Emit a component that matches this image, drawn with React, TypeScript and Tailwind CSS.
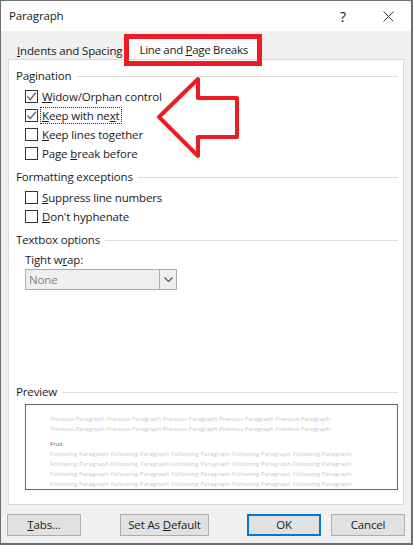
import type { ReactNode } from 'react';

const FONT = 'font-["Open_Sans","Noto_Sans",sans-serif]';
const TEXT = 'text-[11.5px] tracking-[-0.15px] text-[#1a1a1a]';

function GroupLabel({ children }: { children: ReactNode }) {
    return (
        <div className={`flex items-center gap-[5px] h-[16px] leading-[16px] ${TEXT}`}>
            <span>{children}</span>
            <div className="flex-1 h-[1px] bg-[#dcdcdc]" />
        </div>
    );
}

function CheckRow({ label, checked, focused }: { label: ReactNode; checked?: boolean; focused?: boolean }) {
    return (
        <div className="flex items-center h-[19px] pl-[9px]">
            <div className="w-[13px] h-[13px] border border-[#333333] bg-white flex items-center justify-center shrink-0">
                {checked && (
                    <svg width="11" height="11" viewBox="0 0 11 11" fill="none">
                        <path d="M1.5 5.5 L4.2 8.5 L9.8 1.8" stroke="#707070" strokeWidth="1.5" />
                    </svg>
                )}
            </div>
            <span
                className={`ml-[2px] px-[1px] leading-[15px] border border-dotted ${TEXT} ${
                    focused ? 'border-[#333333]' : 'border-transparent'
                }`}
            >
                {label}
            </span>
        </div>
    );
}

function DialogButton({ children, width, primary }: { children: ReactNode; width: string; primary?: boolean }) {
    return (
        <button
            className={`h-[22px] ${width} flex items-center justify-center bg-[#e1e1e1] ${TEXT} ${
                primary ? 'border-2 border-[#0078d7]' : 'border border-[#adadad]'
            }`}
        >
            {children}
        </button>
    );
}

const previousLine = Array(5).fill('Previous Paragraph').join(' ');
const followingLine = Array(5).fill('Following Paragraph').join(' ');

export default function App() {
    return (
        <div className={`${FONT} relative w-[413px] h-[545px] overflow-hidden bg-[#f0f0f0] border-t border-l border-r-2 border-b-2 border-[#6e6e6e] flex flex-col`}>
            {/* Title bar */}
            <div className={`h-[30px] bg-white flex items-center shrink-0 pl-[8px] ${TEXT}`}>
                <span>Paragraph</span>
                <span className="ml-auto text-[14px] mr-[37px]">?</span>
                <svg className="mr-[17px]" width="11" height="11" viewBox="0 0 11 11" fill="none">
                    <path d="M0.5 0.5 L10.5 10.5 M10.5 0.5 L0.5 10.5" stroke="#333333" strokeWidth="1" />
                </svg>
            </div>

            {/* Tabs */}
            <div className={`h-[28px] pl-[16px] flex items-end shrink-0 ${TEXT}`}>
                <span className="leading-[16px]">
                    <u>I</u>ndents and Spacing
                </span>
                <div className="ml-[7px] w-[128px] h-[20px] bg-white pl-[10px] pt-[3px] leading-[16px] tracking-[-0.3px]">
                    Line and <u>P</u>age Breaks
                </div>
            </div>

            {/* Tab panel */}
            <div className="ml-[7px] mr-[7px] h-[446px] shrink-0 bg-white border border-[#d9d9d9] pl-[7px] pr-[5px] pt-[8px] flex flex-col">
                <GroupLabel>Pagination</GroupLabel>
                <div className="mt-[3px]">
                    <CheckRow checked label={<><u>W</u>idow/Orphan control</>} />
                    <CheckRow checked focused label={<><u>K</u>eep with ne<u>x</u>t</>} />
                    <CheckRow label={<><u>K</u>eep lines together</>} />
                    <CheckRow label={<>Page <u>b</u>reak before</>} />
                </div>

                <div className="mt-[6px]">
                    <GroupLabel>Formatting exceptions</GroupLabel>
                </div>
                <div className="mt-[3px]">
                    <CheckRow label={<><u>S</u>uppress line numbers</>} />
                    <CheckRow label={<><u>D</u>on't hyphenate</>} />
                </div>

                <div className="mt-[6px]">
                    <GroupLabel>Textbox options</GroupLabel>
                </div>
                <div className={`mt-[4px] pl-[9px] h-[16px] leading-[16px] ${TEXT}`}>
                    Tight w<u>r</u>ap:
                </div>
                <div className="mt-[1px] ml-[9px] w-[152px] h-[21px] bg-[#efefef] border border-[#adadad] flex items-center">
                    <span className="pl-[3px] flex-1 text-[11.5px] tracking-[-0.15px] text-[#808080]">None</span>
                    <div className="w-[17px] h-full border-l border-[#adadad] flex items-center justify-center">
                        <svg width="9" height="6" viewBox="0 0 9 6" fill="none">
                            <path d="M0.5 0.5 L4.5 4.5 L8.5 0.5" stroke="#555555" strokeWidth="1.2" />
                        </svg>
                    </div>
                </div>

                <div className="mt-[94px]">
                    <GroupLabel>Preview</GroupLabel>
                </div>
                <div className="mt-[4px] ml-[9px] h-[86px] border border-[#646464] overflow-hidden pl-[24px] pt-[9px] text-[6px] font-medium leading-[10px] text-[#c8c8c8] whitespace-nowrap">
                    <div>{previousLine}</div>
                    <div>{previousLine}</div>
                    <div className="mt-[5px] text-[#606060]">Fruit</div>
                    <div className="tracking-[0.1px]">{followingLine}</div>
                    <div className="tracking-[0.1px]">{followingLine}</div>
                    <div className="tracking-[0.1px]">{followingLine}</div>
                    <div className="tracking-[0.1px]">{followingLine}</div>
                    <div className="tracking-[0.1px]">{followingLine}</div>
                </div>
            </div>

            {/* Footer buttons */}
            <div className="mt-[9px] pl-[6px] flex items-center shrink-0">
                <DialogButton width="w-[74px]"><span><u>T</u>abs...</span></DialogButton>
                <div className="ml-[39px]">
                    <DialogButton width="w-[89px]"><span>Set As <u>D</u>efault</span></DialogButton>
                </div>
                <div className="ml-[38px]">
                    <DialogButton width="w-[74px]" primary>OK</DialogButton>
                </div>
                <div className="ml-[10px]">
                    <DialogButton width="w-[74px]">Cancel</DialogButton>
                </div>
            </div>

            {/* Red annotations over the dialog */}
            <div className="absolute left-[123px] top-[33px] w-[138px] h-[32px] border-[5px] border-[#ed1c24]" />
            <svg className="absolute left-[0px] top-[0px]" width="413" height="545" fill="none">
                <path
                    d="M158 116 L197 78 L197 97 L236 97 L236 136 L197 136 L197 155 Z"
                    stroke="#ed1c24"
                    strokeWidth="4"
                    strokeLinejoin="round"
                />
            </svg>
        </div>
    );
}
